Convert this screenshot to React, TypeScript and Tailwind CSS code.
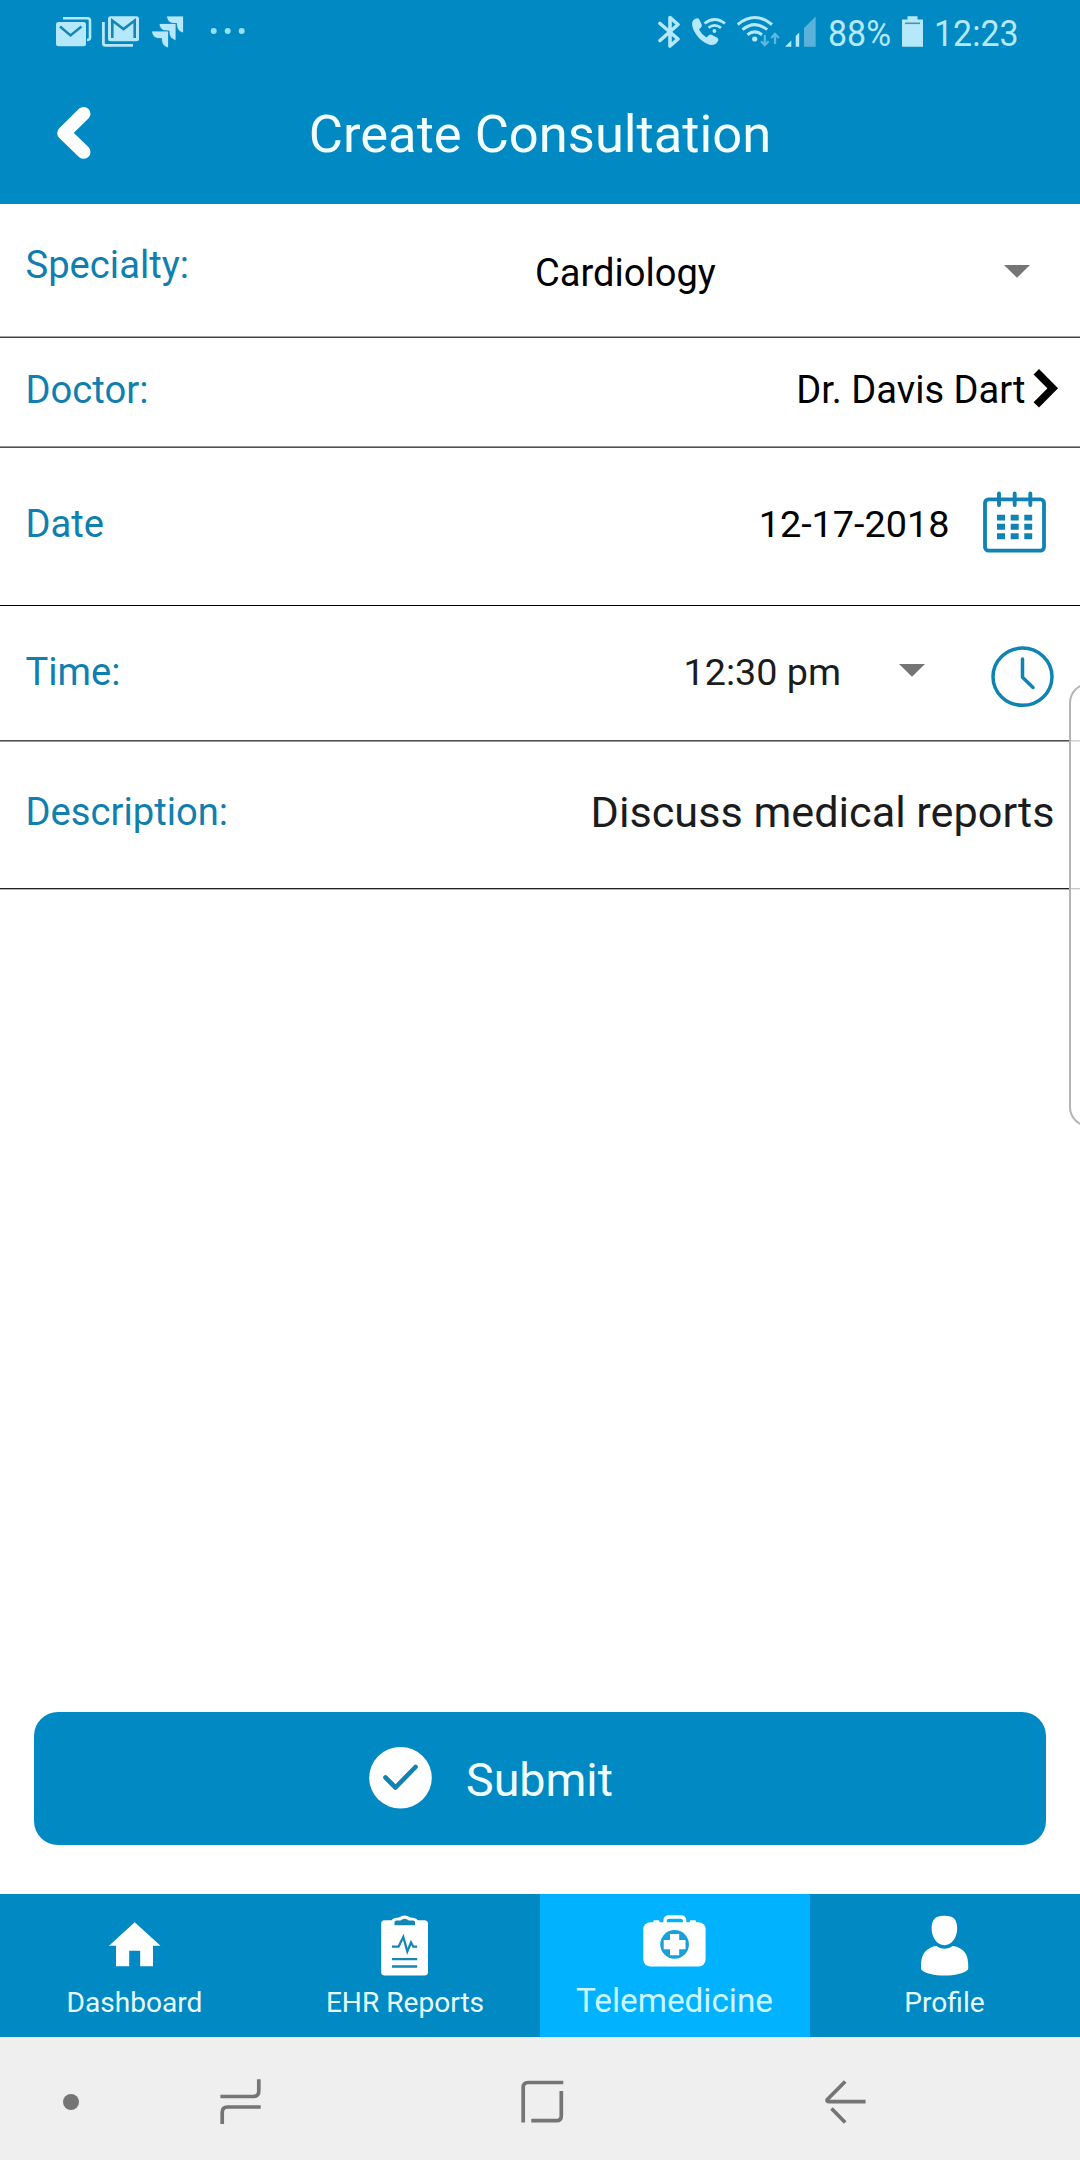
import type { ReactNode } from 'react';

type IconProps = { box: string; className: string; children: ReactNode };

function Icon({ box, className, children }: IconProps) {
  return (
    <svg viewBox={box} className={`block shrink-0 ${className}`} fill="none" aria-hidden="true">
      {children}
    </svg>
  );
}

function StatusBar() {
  return (
    <div className="flex h-16 items-start pt-4 pl-14 text-[#b5e8fa]">
      <Icon box="56 16 36 32" className="h-8 w-9">
        <path d="M63 18.3H87.5Q90 18.3 90 21V37.5Q90 40 87 40" stroke="currentColor" strokeWidth="2.6" />
        <rect x="56" y="22" width="30" height="24.3" rx="2.5" fill="currentColor" />
        <path d="M60 26.5L70.5 35.5L81.5 26.5" stroke="#1585b6" strokeWidth="2.4" />
      </Icon>
      <Icon box="102 16 38 32" className="ml-2.5 h-8 w-[38px]">
        <path d="M103.4 22V43.5Q103.4 45.4 105.5 45.4H133" stroke="currentColor" strokeWidth="2.8" />
        <rect x="108" y="16.3" width="31" height="25" rx="2.5" fill="currentColor" />
        <path d="M112.3 38V20.5L123.5 29L134.7 20.5V38" stroke="#1585b6" strokeWidth="2.6" />
      </Icon>
      <Icon box="152 16 32 32" className="ml-3 h-8 w-8">
        <g fill="currentColor" stroke="#0089c2" strokeWidth="0.8">
          <path d="M166.5 16H183.5V33C179 32 176.500 29 176.500 23.500H174C169.500 23.500 167 20.500 166.500 16Z" />
          <path d="M159 23.500H176V40.500C171.500 39.500 169 36.500 169 31H166.500C162 31 159.500 28 159 23.500Z" />
          <path d="M151.500 31H168.500V48C164 47 161.500 44 161.500 38.500H159C154.500 38.500 152 35.500 151.500 31Z" />
        </g>
      </Icon>
      <Icon box="210 16 36 32" className="ml-[26px] h-8 w-9">
        <g fill="#93e2f8">
          <circle cx="213.700" cy="31" r="3" />
          <circle cx="227.700" cy="31" r="3" />
          <circle cx="241.700" cy="31" r="3" />
        </g>
      </Icon>
      <Icon box="658 15 23 34" className="-mt-px ml-[412px] h-[34px] w-[23px]">
        <path d="M660 23.500L678 39L670 46V17.500L678 24.500L660 40.500" stroke="currentColor" strokeWidth="3.600" strokeLinecap="round" strokeLinejoin="round" />
      </Icon>
      <Icon box="691 16 35 32" className="ml-2.5 h-8 w-[35px]">
        <path d="M697 18.300Q693.500 18.800 692.200 22.500C691 31 702 44 711.500 45Q716 45 718.300 40.500Q719 38.500 717 37.500L711.500 34.800Q709.800 34.200 708.500 35.500L706.500 37.500Q701.500 34.500 699 29.500L701.200 27.200Q702.200 26 701.700 24.500L699.300 19.500Q698.500 18 697 18.300Z" fill="currentColor" />
        <path d="M704.500 23.500Q714.500 15.500 725 23.500M708.500 27.800Q714.500 23 721 27.800" stroke="currentColor" strokeWidth="2.700" />
        <circle cx="714.400" cy="31" r="1.900" fill="currentColor" />
      </Icon>
      <Icon box="737 15 43 33" className="-mt-px ml-[11px] h-[33px] w-[43px]">
        <path d="M737.700 24.500Q754.700 10.500 772 24.500M742.500 29.700Q754.700 19.500 767.200 29.700M747.500 34.700Q754.700 29 762 34.700" stroke="currentColor" strokeWidth="3" />
        <circle cx="754.700" cy="39" r="2.600" fill="currentColor" />
        <path d="M764.800 35V45M761 41.300L764.800 45.200L768.600 41.300M775 44V34M771.200 38L775 34L778.800 38" stroke="#5bb8df" strokeWidth="2.300" />
      </Icon>
      <Icon box="785 16 31 32" className="ml-[5px] h-8 w-[31px]">
        <path d="M785 46.700L791.300 40.500V46.700ZM795.700 36L799.200 32.500V46.700H795.700Z" fill="currentColor" />
        <path d="M804 28L815.700 16.500V46.700H804Z" fill="#5ab2da" />
      </Icon>
      <span className="mt-0.5 ml-3 w-[74px] origin-left scale-x-[0.93] text-[36.500px] leading-8">88%</span>
      <Icon box="902 16 22 32" className="h-8 w-[22px]">
        <path d="M902 19.500H907.500V16.300H917.500V19.500H923V46.700H902Z" fill="currentColor" />
        <path d="M905 23.300H920" stroke="#4e92ad" strokeWidth="1.600" />
      </Icon>
      <span className="mt-0.5 ml-2.5 origin-left scale-x-[0.93] text-[36.500px] leading-8">12:23</span>
    </div>
  );
}

function Header() {
  return (
    <header className="h-[204px] bg-[#0089c2]">
      <StatusBar />
      <div className="grid h-[140px] grid-cols-[300px_1fr_300px] items-start">
        <Icon box="56 106 36 54" className="mt-[42px] ml-14 h-[54px] w-9">
          <path d="M83.700 113.700L64 133L83.700 152" stroke="#fff" strokeWidth="13.600" strokeLinecap="round" strokeLinejoin="round" />
        </Icon>
        <h1 className="mt-10 text-center text-[52.500px] leading-[60px] whitespace-nowrap text-[#f4ffff]">Create Consultation</h1>
      </div>
    </header>
  );
}

function DropArrow({ className }: { className: string }) {
  return (
    <Icon box="0 0 26 13" className={`h-[13px] w-[26px] ${className}`}>
      <path d="M0 0H26L13 12.700Z" fill="#757575" />
    </Icon>
  );
}

function Row({ className, label, labelClass, lines, children }: { className: string; label: string; labelClass: string; lines: string[]; children: ReactNode }) {
  return (
    <div className={`flex flex-col ${className}`}>
      <div className="flex flex-1 items-start pl-[25.500px] text-[38.100px] leading-[44px] text-black">
        <span className={`mr-auto text-[38.200px] text-[#107fb0] ${labelClass}`}>{label}</span>
        {children}
      </div>
      {lines.map((line) => (
        <div key={line} className={`h-px ${line}`} />
      ))}
    </div>
  );
}

function Form() {
  return (
    <section>
      <Row className="h-[134px]" label="Specialty:" labelClass="mt-[39px]" lines={['bg-[#a3a3a3]', 'bg-[#404040]']}>
        <span className="mt-[47px] w-[469px]">Cardiology</span>
        <DropArrow className="mt-[61px] mr-[50px]" />
      </Row>
      <Row className="h-[110px]" label="Doctor:" labelClass="mt-[30px]" lines={['bg-[#969696]', 'bg-[#4f4f4f]']}>
        <span className="mt-[30px] mr-[7.500px]">Dr. Davis Dart</span>
        <Icon box="1033 369 26 39" className="mt-[31px] mr-[21px] h-[39px] w-[26px]">
          <path d="M1036.300 371.800L1052.700 388.300L1036.300 404.900" stroke="#000" strokeWidth="7.600" />
        </Icon>
      </Row>
      <Row className="h-[158px]" label="Date" labelClass="mt-[54px]" lines={['bg-black']}>
        <span className="mt-[54px] mr-[33.500px] text-[37.800px]">12-17-2018</span>
        <Icon box="983 491 63 62" className="mt-[43px] mr-[34px] h-[62px] w-[63px]">
          <rect x="985" y="499.400" width="59" height="51.200" rx="3.500" stroke="#0f83b4" strokeWidth="3.800" />
          <path d="M999 493.500V505M1014.700 493.500V505M1030.300 493.500V505" stroke="#0f83b4" strokeWidth="3.900" strokeLinecap="round" />
          <path d="M997 517.600H1005M1010.700 517.600H1018.700M1024.300 517.600H1032.200M997 526.700H1005M1010.700 526.700H1018.700M1024.300 526.700H1032.200M997 536.200H1005M1010.700 536.200H1018.700M1024.300 536.200H1032.200" stroke="#0f83b4" strokeWidth="5.900" />
        </Icon>
      </Row>
      <Row className="h-[136px]" label="Time:" labelClass="mt-[43.500px]" lines={['bg-[#505050]', 'bg-[#969696]']}>
        <span className="mt-[43.500px] mr-[58px] text-[37.700px] text-[#1c1c1c]">12:30 pm</span>
        <DropArrow className="mt-[58px] mr-[66px]" />
        <Icon box="991 646 63 62" className="mt-10 mr-[26px] h-[62px] w-[63px]">
          <ellipse cx="1022.500" cy="676.700" rx="29.500" ry="28.600" stroke="#0f83b4" strokeWidth="3.500" />
          <path d="M1022.500 659V677.300L1033 687.500" stroke="#0f83b4" strokeWidth="3.500" strokeLinecap="round" strokeLinejoin="round" />
        </Icon>
      </Row>
      <Row className="h-[148px]" label="Description:" labelClass="mt-12" lines={['bg-[#222222]', 'bg-[#b3b3b3]']}>
        <span className="mt-[49px] mr-[25.500px] text-[43.200px] text-[#1c1c1c]">Discuss medical reports</span>
      </Row>
    </section>
  );
}

function TabBar() {
  const label = 'mt-[9px] text-[28.100px] leading-9 text-[#e9fcff]';
  return (
    <nav className="grid h-[143px] grid-cols-4 bg-[#0089c2] text-center">
      <div className="flex flex-col items-center">
        <Icon box="109 1915 52 61" className="mt-[21px] h-[61px] w-[52px]">
          <path d="M134.700 1922.300L160.500 1945.700H153V1966.200H140.200V1950.700H129.200V1966.200H116V1945.700H109Z" fill="#fff" />
        </Icon>
        <span className={`mr-px ${label}`}>Dashboard</span>
      </div>
      <div className="flex flex-col items-center">
        <Icon box="381 1915 48 61" className="mt-[21px] h-[61px] w-12">
          <path d="M384.500 1920.300H391.500Q393.500 1917.600 399 1917.500Q404.700 1913.500 410.300 1917.500Q415.800 1917.600 417.800 1920.300H424.500Q428 1920.300 428 1923.800V1972Q428 1975.500 424.500 1975.500H384.700Q381.200 1975.500 381.200 1972V1923.800Q381.200 1920.300 384.500 1920.300Z" fill="#fff" />
          <path d="M394.500 1925.300V1922Q394.500 1920.500 396.500 1920.500H400.500Q404.700 1916.800 408.900 1920.500H413Q415 1920.500 415 1922V1925.300Z" fill="#1687b4" />
          <path d="M392 1946.700H398.500L403.300 1937L407.300 1951.500L411 1942.500L413.300 1946.700H417.200M392 1959.200H417.200M392 1966.500H417.200" stroke="#1687b4" strokeWidth="2.300" />
        </Icon>
        <span className={label}>EHR Reports</span>
      </div>
      <div className="flex flex-col items-center bg-[#00b2ff]">
        <Icon box="643 1915 63 53" className="mt-[21px] mr-px h-[53px] w-[63px]">
          <rect x="643.300" y="1922.300" width="62.300" height="44.300" rx="7" fill="#fff" />
          <path d="M653.300 1923V1921.500Q653.300 1920.300 654.500 1920.300H658.300Q659.500 1920.300 659.500 1921.500V1923ZM689.700 1923V1921.500Q689.700 1920.300 690.900 1920.300H694.900Q696.100 1920.300 696.100 1921.500V1923Z" fill="#fff" />
          <path d="M665 1923.500V1921Q665 1917 669 1917H680.700Q684.700 1917 684.700 1921V1923.500" stroke="#fff" strokeWidth="3.400" />
          <circle cx="674.600" cy="1944.400" r="14.300" fill="#18a0dc" />
          <path d="M663.700 1944.600H685.500M674.600 1933.900V1955.300" stroke="#fff" strokeWidth="9.200" />
        </Icon>
        <span className="mt-3 mr-px text-[33.300px] leading-[42px] text-[#cdf6ff]">Telemedicine</span>
      </div>
      <div className="flex flex-col items-center">
        <Icon box="921 1915 48 61" className="mt-[21px] mr-px h-[61px] w-12">
          <path d="M944.400 1915.700C953 1915.500 957 1919 957.200 1928C957.300 1937 952 1945.200 944.400 1945.200C937 1945.200 931.500 1937 931.600 1928C931.800 1919 936 1915.500 944.400 1915.700Z" fill="#fff" />
          <path d="M936.500 1946C941 1949.500 948 1949.500 952.500 1946C962 1947 967.500 1953 968 1962Q968.500 1967 968 1969.500C964 1973.500 954.500 1975.500 944.500 1975.500C934.500 1975.500 925 1973.500 921.200 1969.500Q920.700 1967 921.200 1962C922 1953 927.500 1947 936.500 1946Z" fill="#fff" />
        </Icon>
        <span className={`mr-px ${label}`}>Profile</span>
      </div>
    </nav>
  );
}

function SystemNav() {
  return (
    <div className="flex h-[123px] items-center bg-[#efefef] pt-1.5 pl-[63px] text-[#757575]">
      <div className="size-4 rounded-full bg-current" />
      <Icon box="220 2079 41 46" className="ml-[141px] h-[46px] w-[41px]">
        <path d="M220.400 2096.500H253.500Q258.800 2096.500 258.800 2091V2079.300M222.200 2124V2112.500Q222.200 2107 227.500 2107H260.700" stroke="currentColor" strokeWidth="3.700" />
      </Icon>
      <Icon box="521 2079 43 46" className="ml-[260px] h-[46px] w-[43px]">
        <path d="M523.200 2122.500V2087.500Q523.200 2082.500 528.200 2082.500H563.300M561.300 2091V2115.700Q561.300 2120.700 556.300 2120.700H531.300" stroke="currentColor" strokeWidth="3.700" />
      </Icon>
      <Icon box="825 2079 41 46" className="ml-[261px] h-[46px] w-[41px]">
        <path d="M845.200 2081.500L827.300 2099.500Q826.500 2101.700 829 2101.700H865.600M831.500 2108.500L845.200 2122.500" stroke="currentColor" strokeWidth="3.700" />
      </Icon>
    </div>
  );
}

export default function App() {
  return (
    <div className="relative flex h-[2160px] w-[1080px] flex-col overflow-hidden bg-white font-['Roboto',sans-serif]">
      <Header />
      <Form />
      <main className="flex flex-1 flex-col justify-end px-[34px] pb-[49px]">
        <button className="flex h-[133px] items-start rounded-[24px] bg-[#0089c2] pl-[335px] text-left">
          <Icon box="369 1747 63 62" className="mt-[35px] h-[62px] w-[63px]">
            <ellipse cx="400.500" cy="1777.800" rx="31.300" ry="30.800" fill="#fff" />
            <path d="M385.500 1777.500L395.500 1787.500L415.500 1767" stroke="#1282b2" strokeWidth="4.600" strokeLinecap="round" strokeLinejoin="round" />
          </Icon>
          <span className="mt-[41px] ml-[34px] text-[46.600px] leading-[54px] text-[#f0feff]">Submit</span>
        </button>
      </main>
      <TabBar />
      <SystemNav />
      <div className="absolute top-[683px] -right-10 h-[444px] w-[51px] rounded-[20px] border-2 border-[#b4b4b4] bg-white/75" />
    </div>
  );
}
